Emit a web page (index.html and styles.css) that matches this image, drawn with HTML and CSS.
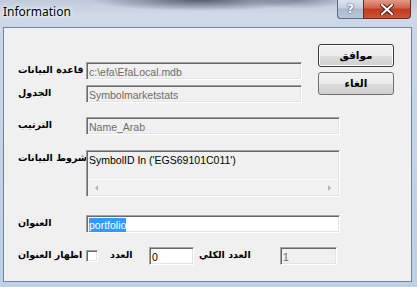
FILE: index.html
```html
<!DOCTYPE html>
<html lang="ar">
<head>
  <meta charset="UTF-8" />
  <title>Information</title>
  <link rel="stylesheet" href="styles.css">
</head>
<body>
  <div class="window">
    <div class="titlebar">
      <span class="title">Information</span>
      <div class="caption-btns">
        <span class="cap help">?</span>
        <span class="cap close">
          <svg width="14" height="11" viewBox="0 0 14 11">
            <path d="M2 1 L12 10 M12 1 L2 10" stroke="#4a1e1a" stroke-width="4" stroke-linecap="square" />
            <path d="M2 1 L12 10 M12 1 L2 10" stroke="#fff" stroke-width="2" stroke-linecap="square" />
          </svg>
        </span>
      </div>
    </div>

    <div class="client">
      <!-- top part: first two fields + dialog buttons -->
      <div class="top">
        <div class="top-fields">
          <div class="row">
            <span class="lbl">قاعدة البيانات</span>
            <div class="edit disabled short">c:\efa\EfaLocal.mdb</div>
          </div>
          <div class="row">
            <span class="lbl">الجدول</span>
            <div class="edit disabled short">Symbolmarketstats</div>
          </div>
        </div>
        <div class="buttons">
          <button class="btn default">موافق</button>
          <button class="btn">الغاء</button>
        </div>
      </div>

      <div class="row r-order">
        <span class="lbl">الترتيب</span>
        <div class="edit disabled long">Name_Arab</div>
      </div>

      <div class="row r-cond">
        <span class="lbl">شروط البيانات</span>
        <div class="edit disabled long memo">
          <div class="memo-text">SymbolID In ('EGS69101C011')</div>
          <div class="hscroll">
            <span class="arrow left"></span>
            <span class="track"></span>
            <span class="arrow right"></span>
          </div>
        </div>
      </div>

      <div class="row r-title">
        <span class="lbl">العنوان</span>
        <div class="edit white long"><span class="sel">portfolio</span></div>
      </div>

      <div class="row r-bottom">
        <span class="lbl">اظهار العنوان</span>
        <span class="check"></span>
        <span class="lbl count-lbl">العدد</span>
        <div class="edit white num">0</div>
        <span class="lbl total-lbl">العدد الكلي</span>
        <div class="edit disabled total">1</div>
      </div>
    </div>
  </div>
</body>
</html>
```

FILE: styles.css
```css
* {
  box-sizing: border-box;
}

body {
  margin: 0;
  width: 417px;
  height: 287px;
  overflow: hidden;
  font-family: "DejaVu Sans", sans-serif;
}

.window {
  width: 417px;
  height: 287px;
  display: flex;
  flex-direction: column;
  background:
    radial-gradient(ellipse 110px 11px at 200px 0, rgba(40, 48, 62, 0.7), rgba(40, 48, 62, 0) 100%),
    radial-gradient(ellipse 50px 9px at 300px 0, rgba(60, 70, 90, 0.45), rgba(60, 70, 90, 0) 100%),
    linear-gradient(180deg, #bfcadb 0, #d0d9e7 14px, #cad6e7 27px, #bcd0e8 100%);
}

.titlebar {
  height: 27px;
  display: flex;
  justify-content: space-between;
  align-items: flex-start;
  padding: 0 6px 0 3px;
}

.title {
  font-family: "Noto Sans", sans-serif;
  font-size: 12px;
  line-height: 14px;
  margin-top: 5px;
  color: #000;
  text-shadow: 0 0 6px #fff, 0 0 3px #fff;
}

.caption-btns {
  display: flex;
}

.cap {
  height: 19px;
  display: flex;
  align-items: center;
  justify-content: center;
  border: 1px solid #5d6b80;
  border-top: none;
}

.help {
  width: 26px;
  border-radius: 0 0 0 4px;
  border-right: none;
  background: linear-gradient(180deg, #dbe3ee 0, #c3cfdf 45%, #aab9cd 50%, #b9c8da 100%);
  font-family: "DejaVu Sans", sans-serif;
  font-weight: bold;
  font-size: 12px;
  color: #fff;
  text-shadow: 0 0 2px #4a5568, 0 0 1px #4a5568;
}

.close {
  width: 48px;
  border-color: #6a2a22;
  border-radius: 0 0 4px 0;
  background: linear-gradient(180deg, #e39a88 0, #d0604a 45%, #c03a22 50%, #cc5434 100%);
}

.client {
  flex: 1;
  margin: 0 5px 5px 3px;
  border: 1px solid #75839a;
  background: #f0f0f0;
  padding: 16px 0 0 14px;
}

.top {
  display: flex;
  align-items: flex-start;
}

.top-fields {
  padding-top: 18px;
  display: flex;
  flex-direction: column;
  gap: 5px;
}

.buttons {
  margin-left: 16px;
  display: flex;
  flex-direction: column;
  gap: 5px;
}

.btn {
  width: 76px;
  height: 23px;
  padding: 0 0 2px;
  border: 1px solid #707070;
  border-radius: 3px;
  background: linear-gradient(180deg, #f2f2f2 0, #ebebeb 50%, #dddddd 51%, #cfcfcf 100%);
  font-family: "DejaVu Sans", sans-serif;
  font-weight: bold;
  font-size: 10.5px;
  color: #000;
}

.btn.default {
  border-color: #3c3c3c;
  box-shadow: inset 0 0 0 1px #fafafa;
}

.row {
  display: flex;
  align-items: center;
}

.lbl {
  width: 68px;
  flex: none;
  font-weight: bold;
  font-size: 9.5px;
  line-height: 14px;
  color: #000;
  white-space: nowrap;
  padding-bottom: 3px;
}

.edit {
  height: 18px;
  flex: none;
  font-family: "Liberation Sans", sans-serif;
  font-size: 10.5px;
  line-height: 14px;
  padding: 2px 0 0 2px;
  border-top: 1px solid #a0a0a0;
  border-left: 1px solid #a0a0a0;
  border-right: 1px solid #fff;
  border-bottom: 1px solid #fff;
  box-shadow: inset 1px 1px 0 #696969, inset -1px -1px 0 #e3e3e3;
  white-space: nowrap;
  overflow: hidden;
}

.disabled {
  background: #f0f0f0;
  color: #6d6d6d;
}

.white {
  background: #fff;
  color: #000;
}

.short {
  width: 216px;
}

.long {
  width: 254px;
}

.r-order {
  margin-top: 14px;
}

.r-cond {
  margin-top: 15px;
  align-items: flex-start;
}

.r-cond .lbl {
  padding-top: 1px;
}

.memo {
  height: 47px;
  padding: 2px 1px 1px 2px;
  display: flex;
  flex-direction: column;
  justify-content: space-between;
}

.memo-text {
  color: #000;
}

.hscroll {
  height: 16px;
  margin-left: -1px;
  display: flex;
  align-items: center;
  background: #f2f2f2;
  border-top: 1px solid #fbfbfb;
}

.track {
  flex: 1;
}

.arrow {
  width: 17px;
  height: 15px;
  display: flex;
  align-items: center;
  justify-content: center;
}

.arrow::before {
  content: "";
  border-top: 3px solid transparent;
  border-bottom: 3px solid transparent;
}

.arrow.left::before {
  border-right: 3px solid #b4b4b4;
}

.arrow.right::before {
  border-left: 3px solid #b4b4b4;
}

.r-title {
  margin-top: 18px;
}

.sel {
  background: #3399ff;
  color: #fff;
  padding: 1px 0 2px;
}

.r-bottom {
  margin-top: 14px;
}

.check {
  width: 12px;
  height: 12px;
  flex: none;
  background: #fff;
  border-top: 1px solid #a0a0a0;
  border-left: 1px solid #a0a0a0;
  border-right: 1px solid #fff;
  border-bottom: 1px solid #fff;
  box-shadow: inset 1px 1px 0 #696969, inset -1px -1px 0 #e3e3e3;
}

.count-lbl {
  width: 39px;
  margin-left: 12px;
}

.num {
  width: 45px;
}

.total-lbl {
  width: 81px;
  margin-left: 5px;
}

.total {
  width: 57px;
}
```
